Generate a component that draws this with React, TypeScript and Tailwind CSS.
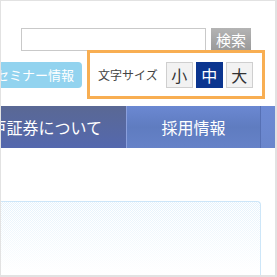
import React from 'react';

const SIZES = [
  { label: '小', active: false },
  { label: '中', active: true },
  { label: '大', active: false },
];

export default function App() {
  return (
    <div
      className="flex h-[277px] w-[277px] flex-col overflow-hidden border-t border-l border-r-2 border-b-2 border-[#e2e2e2] bg-white"
      style={{ fontFamily: '"Noto Sans CJK JP", "Noto Sans", sans-serif' }}
    >
      {/* search row */}
      <div className="flex items-start pl-[20px] pt-[27px]">
        <div className="h-[23px] w-[185px] border border-[#c9c9c9] bg-white" />
        <button className="ml-[5px] flex h-[22px] w-[40px] items-center justify-center bg-gradient-to-b from-[#b4b4b4] to-[#9a9a9a] text-[15px] leading-none text-white">
          検索
        </button>
      </div>

      {/* seminar + font size row */}
      <div className="-mt-[1px] flex items-center">
        <div className="flex h-[26px] w-[81px] items-center justify-end overflow-hidden rounded-r-[4px] bg-[#92d3ef] pr-[8px] text-[13px] leading-none whitespace-nowrap text-white">
          セミナー情報
        </div>
        <div className="ml-[5px] flex h-[49px] w-[178px] items-center border-[3px] border-[#f8ae52] pl-[8px]">
          <span className="text-[12px] leading-none text-[#444]">文字サイズ</span>
          <div className="ml-[8px] flex gap-[3px]">
            {SIZES.map((s) => (
              <div
                key={s.label}
                className={
                  s.active
                    ? 'flex h-[26px] w-[27px] items-center justify-center bg-[#0b358f] text-[16px] leading-none text-white'
                    : 'flex h-[26px] w-[27px] items-center justify-center border border-[#cfcfcf] bg-[#f2f2f2] text-[16px] leading-none text-[#333]'
                }
              >
                {s.label}
              </div>
            ))}
          </div>
        </div>
      </div>

      {/* global nav */}
      <div className="mt-[7px] flex h-[42px] shrink-0">
        <div className="flex w-[125px] items-center justify-end overflow-hidden bg-gradient-to-b from-[#5a6894] to-[#5468ae] pr-[24px] text-[16px] leading-none whitespace-nowrap text-white">
          水戸証券について
        </div>
        <div className="w-[1px] bg-[#8a9fdc]" />
        <div className="flex w-[133px] items-center justify-center bg-gradient-to-b from-[#6b88d2] via-[#5f7cc0] to-[#6682c8] text-[16px] leading-none text-white">
          採用情報
        </div>
        <div className="w-[1px] bg-[#5670b4]" />
        <div className="flex-1 bg-gradient-to-b from-[#6d8ad4] to-[#6a86cc]" />
      </div>

      {/* content box */}
      <div className="mt-[53px] w-[260px] flex-1 overflow-hidden rounded-tr-[4px] border-t border-r border-[#cde6f8] bg-[image:repeating-conic-gradient(#e4f2fc_0%_25%,#ffffff_0%_50%)] bg-[length:2px_2px]">
        <div className="h-full w-full bg-gradient-to-b from-transparent via-[#ffffff80] to-white" />
      </div>
    </div>
  );
}
